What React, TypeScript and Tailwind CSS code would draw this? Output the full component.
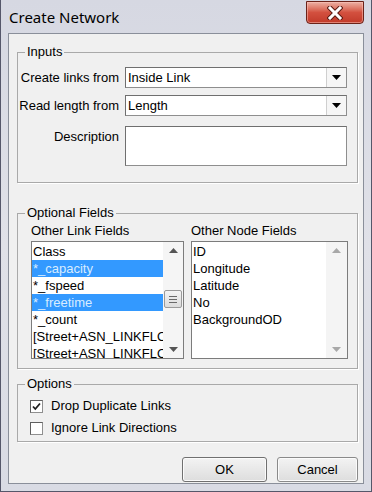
import React from 'react';

const linkFields = [
  { label: 'Class', sel: false },
  { label: '*_capacity', sel: true },
  { label: '*_fspeed', sel: false },
  { label: '*_freetime', sel: true },
  { label: '*_count', sel: false },
  { label: '[Street+ASN_LINKFLOW]', sel: false },
  { label: '[Street+ASN_LINKFLOW]', sel: false },
];

const nodeFields = ['ID', 'Longitude', 'Latitude', 'No', 'BackgroundOD'];

// groupbox: padding goes on the inner div so the legend stays put
const Group = ({
  title,
  className,
  inner,
  children,
}: {
  title: string;
  className?: string;
  inner?: string;
  children: React.ReactNode;
}) => (
  <fieldset className={`ml-[8px] mr-[5px] min-w-0 border border-[#a9a9a9] shadow-[1px_1px_0_#ffffff] ${className ?? ''}`}>
    <legend className="ml-[7px] px-[2px] text-[13px] leading-[16px] text-black">{title}</legend>
    <div className={inner}>{children}</div>
  </fieldset>
);

const Arrow = ({ up, color }: { up?: boolean; color: string }) => (
  <svg width="9" height="5" viewBox="0 0 9 5">
    {up ? <path d="M0 5 L4.5 0 L9 5 Z" fill={color} /> : <path d="M0 0 L9 0 L4.5 5 Z" fill={color} />}
  </svg>
);

const Select = ({ value }: { value: string }) => (
  <div className="flex h-[21px] w-[222px] items-center border border-[#8e8e8e] border-t-[#6f6f6f] border-l-[#6f6f6f] bg-white">
    <span className="flex-1 pl-[2px] text-[13px] leading-[16px]">{value}</span>
    <span className="flex h-full w-[20px] items-center justify-center border-l border-[#cfcfcf] bg-[#f6f6f6]">
      <svg width="9" height="5" viewBox="0 0 9 5">
        <path d="M0 0 L9 0 L4.5 5 Z" fill="#000" />
      </svg>
    </span>
  </div>
);

const Check = ({ checked }: { checked?: boolean }) => (
  <span className="flex h-[13px] w-[13px] items-center justify-center border border-[#8f8f8f] border-t-[#5f5f5f] border-l-[#5f5f5f] bg-white">
    {checked && (
      <svg width="9" height="9" viewBox="0 0 9 9">
        <path d="M1 4.5 L3.3 7 L8 1.5" fill="none" stroke="#1f1f1f" strokeWidth="1.8" />
      </svg>
    )}
  </span>
);

export default function App() {
  return (
    <div className="flex h-[492px] w-[372px] flex-col overflow-hidden border-x border-b border-[#55576a] bg-gradient-to-b from-[#d6d8e2] via-[#e0e1e8] to-[#d9dbe4] font-['Liberation_Sans',Arial,sans-serif] text-black">
      {/* title bar */}
      <div className="flex h-[33px] shrink-0 items-start justify-between">
        <span className="pl-[8px] pt-[7px] font-['Noto_Sans',sans-serif] text-[15px] leading-[20px] text-black">
          Create Network
        </span>
        <div className="mr-[7px] mt-[1px] flex h-[23px] w-[58px] items-center justify-center rounded-b-[4px] border border-[#6b2219] bg-gradient-to-b from-[#eab0a4] via-[#d3503f] to-[#c13a2a] shadow-[inset_0_0_0_1px_rgba(255,200,190,0.5)]">
          <svg width="16" height="14" viewBox="0 0 16 14">
            <path d="M3 2 L13 12 M13 2 L3 12" stroke="#5a1a12" strokeWidth="5" strokeLinecap="square" />
            <path d="M3 2 L13 12 M13 2 L3 12" stroke="#ffffff" strokeWidth="3" strokeLinecap="square" />
          </svg>
        </div>
      </div>

      {/* client */}
      <div className="mx-[7px] flex h-[451px] flex-col border border-[#8a8f9a] bg-[#f0f0f0]">
        <Group title="Inputs" className="mt-[10px]" inner="pb-[16px] pr-[10px] pt-[7px]">
          <div className="grid grid-cols-[101px_1fr] gap-x-[6px]">
            <span className="flex h-[21px] items-center justify-end whitespace-nowrap text-[13px]">Create links from</span>
            <Select value="Inside Link" />
            <span className="mt-[7px] flex h-[21px] items-center justify-end whitespace-nowrap text-[13px]">Read length from</span>
            <div className="mt-[7px]">
              <Select value="Length" />
            </div>
            <span className="mt-[13px] flex justify-end whitespace-nowrap text-[13px] leading-[16px]">Description</span>
            <div className="mt-[10px] h-[40px] w-[222px] border border-[#8e8e8e] border-t-[#6f6f6f] border-l-[#6f6f6f] bg-white" />
          </div>
        </Group>

        <Group title="Optional Fields" className="mt-[22px]" inner="flex gap-[7px] pb-[9px] pl-[13px] pr-[9px] pt-[2px]">
          <div className="flex w-[153px] flex-col gap-[2px]">
            <span className="text-[13px] leading-[16px]">Other Link Fields</span>
            <div className="flex h-[118px] border border-[#7c7c7c] bg-white">
              <div className="flex min-w-0 flex-1 flex-col overflow-hidden pt-[1px]">
                {linkFields.map((f, i) => (
                  <div
                    key={i}
                    className={`h-[17px] shrink-0 whitespace-nowrap pl-[1px] text-[13px] leading-[17px] ${
                      f.sel ? 'bg-[#3399ff] text-[#d8ecff]' : ''
                    }`}
                  >
                    {f.label}
                  </div>
                ))}
              </div>
              <div className="flex w-[20px] flex-col items-center bg-[#f5f5f5]">
                <div className="flex h-[17px] items-center">
                  <Arrow up color="#555" />
                </div>
                <div className="flex-1">
                  <div className="mt-[31px] flex h-[18px] w-[18px] flex-col items-center justify-center gap-[2px] rounded-[2px] border border-[#9a9a9a] bg-gradient-to-b from-[#f4f4f4] to-[#dcdcdc]">
                    <span className="h-px w-[8px] bg-[#6a6a6a]" />
                    <span className="h-px w-[8px] bg-[#6a6a6a]" />
                    <span className="h-px w-[8px] bg-[#6a6a6a]" />
                  </div>
                </div>
                <div className="flex h-[17px] items-center">
                  <Arrow color="#555" />
                </div>
              </div>
            </div>
          </div>
          <div className="flex flex-1 flex-col gap-[2px]">
            <span className="text-[13px] leading-[16px]">Other Node Fields</span>
            <div className="flex h-[118px] border border-[#7c7c7c] bg-white">
              <div className="flex min-w-0 flex-1 flex-col overflow-hidden pt-[1px]">
                {nodeFields.map((f) => (
                  <div key={f} className="h-[17px] shrink-0 whitespace-nowrap pl-[1px] text-[13px] leading-[17px]">
                    {f}
                  </div>
                ))}
              </div>
              <div className="flex w-[21px] flex-col items-center justify-between bg-[#f4f4f4]">
                <div className="flex h-[17px] items-center">
                  <Arrow up color="#a8a8a8" />
                </div>
                <div className="flex h-[17px] items-center">
                  <Arrow color="#a8a8a8" />
                </div>
              </div>
            </div>
          </div>
        </Group>

        <Group title="Options" className="mt-[7px]" inner="flex flex-col gap-[6px] pb-[5px] pl-[12px] pt-[6px]">
          <label className="flex h-[16px] items-center gap-[8px] text-[13px]">
            <Check checked />
            Drop Duplicate Links
          </label>
          <label className="flex h-[16px] items-center gap-[8px] text-[13px]">
            <Check />
            Ignore Link Directions
          </label>
        </Group>

        <div className="mr-[5px] mt-[15px] flex justify-end gap-[10px]">
          <button className="h-[25px] w-[85px] rounded-[3px] border border-[#707070] bg-gradient-to-b from-[#f3f3f3] to-[#dddddd] text-[13px] shadow-[inset_0_0_0_1px_#fbfbfb]">
            OK
          </button>
          <button className="h-[25px] w-[81px] rounded-[3px] border border-[#8a8a8a] bg-gradient-to-b from-[#f3f3f3] to-[#dddddd] text-[13px] shadow-[inset_0_0_0_1px_#fbfbfb]">
            Cancel
          </button>
        </div>
      </div>
    </div>
  );
}
